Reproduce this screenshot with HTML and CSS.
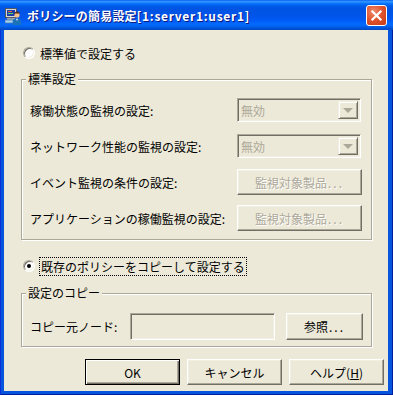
FILE: index.html
```html
<!DOCTYPE html>
<html lang="ja">
<head>
  <meta charset="UTF-8">
  <title>ポリシーの簡易設定</title>
  <link rel="stylesheet" href="styles.css">
</head>
<body>
  <div class="window">
    <div class="titlebar">
      <svg class="app-icon" width="16" height="17" viewBox="0 0 16 17">
        <rect x="0.5" y="0.5" width="11" height="9" fill="#d8d8d8" stroke="#505860"/>
        <rect x="2" y="2" width="8" height="6" fill="#1f3fa8"/>
        <rect x="3" y="3" width="4" height="1" fill="#f06040"/>
        <rect x="3" y="5" width="5" height="1" fill="#60d060"/>
        <rect x="2" y="10" width="8" height="2" fill="#9aa4b0"/>
        <rect x="0" y="12" width="9" height="3" fill="#a8d0f0" stroke="#4c7aa8" stroke-width="0.8"/>
        <circle cx="12" cy="7" r="2.6" fill="#f2c08a"/>
        <path d="M9.3 6.6 Q9.6 3.6 12 3.6 Q14.6 3.6 14.7 6.4 L13.8 5.6 L10.4 5.6 Z" fill="#5a2d10"/>
        <path d="M7.5 17 L7.8 12.8 Q8.4 10.6 12 10.6 Q15.6 10.6 16 12.8 L16 17 Z" fill="#1c72b8"/>
        <path d="M11 10.7 L12 13 L13 10.7 Z" fill="#ffffff"/>
      </svg>
      <span class="title">ポリシーの簡易設定<span class="title-id">[1:server1:user1]</span></span>
      <span class="close">
        <svg width="21" height="21" viewBox="0 0 21 21">
          <path d="M6 6 L15 15 M15 6 L6 15" stroke="#fff" stroke-width="2.4" stroke-linecap="square"/>
        </svg>
      </span>
    </div>

    <div class="client">
      <div class="radio-row first">
        <span class="radio"></span>
        <span>標準値で設定する</span>
      </div>

      <fieldset class="group std">
        <legend>標準設定</legend>
        <div class="rows">
          <div class="row">
            <span>稼働状態の監視の設定:</span>
            <div class="combo">
              <span class="combo-text">無効</span>
              <span class="combo-btn"><span class="arrow"></span></span>
            </div>
          </div>
          <div class="row">
            <span>ネットワーク性能の監視の設定:</span>
            <div class="combo">
              <span class="combo-text">無効</span>
              <span class="combo-btn"><span class="arrow"></span></span>
            </div>
          </div>
          <div class="row">
            <span>イベント監視の条件の設定:</span>
            <button class="btn wide" disabled>監視対象製品<span class="dots">...</span></button>
          </div>
          <div class="row">
            <span>アプリケーションの稼働監視の設定:</span>
            <button class="btn wide" disabled>監視対象製品<span class="dots">...</span></button>
          </div>
        </div>
      </fieldset>

      <div class="radio-row second">
        <span class="radio checked"></span>
        <span class="focus">既存のポリシーをコピーして設定する</span>
      </div>

      <fieldset class="group copy">
        <legend>設定のコピー</legend>
        <div class="copy-row">
          <span class="copy-label">コピー元ノード:</span>
          <span class="textbox"></span>
          <button class="btn browse">参照<span class="dots">...</span></button>
        </div>
      </fieldset>

      <div class="actions">
        <button class="btn action default">OK</button>
        <button class="btn action">キャンセル</button>
        <button class="btn action">ヘルプ(<u>H</u>)</button>
      </div>
    </div>
  </div>
</body>
</html>
```

FILE: styles.css
```css
body {
  margin: 0;
  font-family: "Noto Sans CJK JP", "Liberation Sans", sans-serif;
  font-size: 12px;
  color: #000;
}
.window {
  width: 393px;
  height: 395px;
  display: flex;
  flex-direction: column;
  background: #0855dd;
  box-shadow: inset 1px 0 0 #0831d9, inset -1px 0 0 #001ea0, inset 0 -1px 0 #001ea0;
}
.titlebar {
  height: 30px;
  display: flex;
  align-items: center;
  padding: 0 6px 0 5px;
  background: linear-gradient(to bottom, #0058ee 0%, #3593ff 4%, #288eff 7%, #127dff 10%, #036ffc 13%, #0262ee 17%, #0057e5 23%, #0054e3 30%, #0055eb 56%, #005bf5 68%, #026afe 80%, #0062ef 88%, #0052d6 94%, #0048c0 100%);
}
.app-icon {
  margin-top: 3px;
}
.title {
  margin-left: 6px;
  flex: 1;
  color: #fff;
  font-weight: bold;
  font-size: 12px;
  letter-spacing: 0.2px;
  text-shadow: 1px 1px 0 #0a1883;
}
.title-id {
  letter-spacing: 0.7px;
}
.close {
  width: 21px;
  height: 21px;
  border: 1px solid #fff;
  border-radius: 3px;
  box-sizing: border-box;
  display: flex;
  align-items: center;
  justify-content: center;
  background: radial-gradient(circle at 35% 30%, #ec8c6f 0%, #e2552f 45%, #c63a12 100%);
}
.close svg {
  width: 19px;
  height: 19px;
}
.client {
  flex: 1;
  margin: 0 5px 4px 4px;
  background: #ece9d8;
  display: flex;
  flex-direction: column;
  padding: 15px 0 6px 0;
}
.radio-row {
  display: flex;
  align-items: center;
  height: 16px;
  margin-left: 19px;
  gap: 5px;
}
.radio-row.second {
  margin-top: 17px;
  height: 18px;
}
.radio {
  width: 12px;
  height: 12px;
  box-sizing: border-box;
  border-radius: 50%;
  border: 1px solid;
  border-color: #aca899 #fff #fff #aca899;
  box-shadow: inset 1px 1px 0 #716f64, inset -1px -1px 0 #f1efe2;
  background: #fff;
  position: relative;
}
.radio.checked::after {
  content: "";
  position: absolute;
  left: 3px;
  top: 3px;
  width: 4px;
  height: 4px;
  border-radius: 50%;
  background: #000;
}
.focus {
  outline: 1px dotted #000;
  padding: 1px 1px;
  line-height: 15px;
}
.group {
  margin: 10px 16px 0 17px;
  border: 1px solid #aca899;
  box-shadow: inset 1px 1px 0 #fff, 1px 1px 0 #fff;
  min-width: 0;
}
.group legend {
  margin-left: -4px;
  padding: 0 2px;
  line-height: 16px;
  background: #ece9d8;
}
.std {
  padding: 10px 9px 8px 8px;
}
.rows {
  display: flex;
  flex-direction: column;
  gap: 10px;
}
.row {
  height: 26px;
  display: flex;
  align-items: center;
  justify-content: space-between;
}
.combo {
  width: 124px;
  height: 24px;
  box-sizing: border-box;
  border: 1px solid;
  border-color: #aca899 #fff #fff #aca899;
  box-shadow: inset 1px 1px 0 #716f64, inset -1px -1px 0 #f1efe2;
  display: flex;
  align-items: center;
  padding: 2px 2px 2px 3px;
  margin-right: 1px;
}
.combo-text {
  flex: 1;
  color: #aca899;
}
.combo-btn {
  width: 20px;
  height: 18px;
  box-sizing: border-box;
  border: 1px solid;
  border-color: #f1efe2 #716f64 #716f64 #f1efe2;
  box-shadow: inset 1px 1px 0 #fff, inset -1px -1px 0 #aca899;
  display: flex;
  align-items: center;
  justify-content: center;
}
.arrow {
  width: 0;
  height: 0;
  border-left: 5px solid transparent;
  border-right: 5px solid transparent;
  border-top: 5px solid #aca899;
  margin-top: 1px;
}
.btn {
  font-family: inherit;
  font-size: 12px;
  background: #ece9d8;
  color: #000;
  box-sizing: border-box;
  border: 1px solid;
  border-color: #fff #716f64 #716f64 #fff;
  box-shadow: inset -1px -1px 0 #aca899, inset 1px 1px 0 #f1efe2;
  padding: 0;
  margin: 0;
}
.btn:disabled {
  color: #aca899;
  text-shadow: 1px 1px 0 #fff;
}
.dots {
  letter-spacing: 2px;
  margin-left: 1px;
}
.wide {
  width: 125px;
  height: 26px;
}
.copy {
  padding: 12px 8px 6px 8px;
}
.copy-row {
  display: flex;
  align-items: center;
  height: 27px;
}
.copy-label {
  width: 100px;
}
.textbox {
  width: 145px;
  height: 27px;
  box-sizing: border-box;
  border: 1px solid;
  border-color: #aca899 #fff #fff #aca899;
  box-shadow: inset 1px 1px 0 #716f64, inset -1px -1px 0 #f1efe2;
}
.browse {
  margin-left: 11px;
  width: 77px;
  height: 27px;
}
.actions {
  margin-top: auto;
  display: flex;
  justify-content: flex-end;
  gap: 7px;
  padding-right: 4px;
}
.action {
  width: 95px;
  height: 26px;
}
.default {
  border: 1px solid #000;
  box-shadow: inset 1px 1px 0 #fff, inset -1px -1px 0 #716f64, inset -2px -2px 0 #aca899;
}
```
